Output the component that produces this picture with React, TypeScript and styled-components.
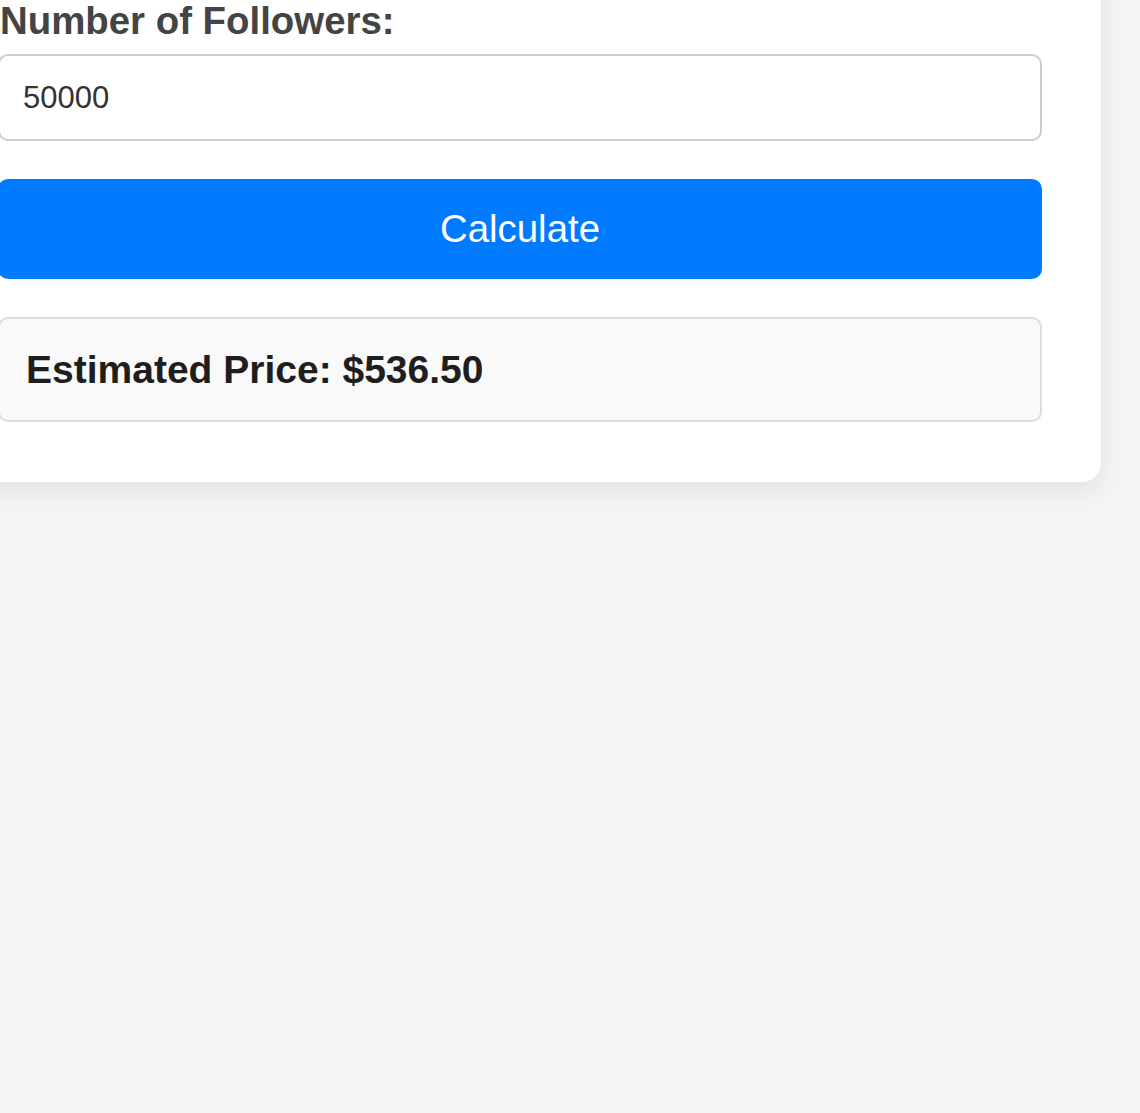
import styled, { createGlobalStyle } from "styled-components";

export default function App() {
  return (
    <>
      <GlobalStyle />
      <Page>
        <Card>
          <Label htmlFor="followers">Number of Followers:</Label>
          <Input id="followers" type="text" defaultValue="50000" readOnly />
          <CalcButton type="button">Calculate</CalcButton>
          <Result>Estimated Price: $536.50</Result>
        </Card>
      </Page>
    </>
  );
}

const GlobalStyle = createGlobalStyle`
  html, body {
    margin: 0;
    padding: 0;
    background: #f3f4f6;
    font-family: "Liberation Sans", Arial, sans-serif;
    overflow: hidden;
  }
`;

const Page = styled.div`
  width: 1140px;
  height: 1113px;
  background: #f3f4f6;
  overflow: hidden;
`;

const Card = styled.div`
  box-sizing: border-box;
  width: 1163px;
  margin: -61px 0 0 -62px;
  padding: 60px 59px 60px 60px;
  background: #fff;
  border-radius: 19px;
  box-shadow: 0 8px 24px rgba(0, 0, 0, 0.08);
  display: flex;
  flex-direction: column;
`;

const Label = styled.label`
  display: block;
  padding-left: 2px;
  font-size: 38.4px;
  font-weight: bold;
  color: #444;
  line-height: 44px;
`;

const Input = styled.input`
  box-sizing: border-box;
  height: 87px;
  margin-top: 11px;
  padding: 0 23px;
  border: 2px solid #ccc;
  border-radius: 10px;
  background: #fff;
  font-family: "Liberation Sans", Arial, sans-serif;
  font-size: 31px;
  color: #333;
  outline: none;
`;

const CalcButton = styled.button`
  height: 100px;
  margin-top: 38px;
  border: none;
  border-radius: 10px;
  background: #007bff;
  color: #fff;
  font-family: "Liberation Sans", Arial, sans-serif;
  font-size: 38.4px;
  cursor: pointer;
`;

const Result = styled.div`
  box-sizing: border-box;
  height: 105px;
  margin-top: 38px;
  padding: 0 26px;
  display: flex;
  align-items: center;
  background: #f9f9f9;
  border: 2px solid #ddd;
  border-radius: 10px;
  font-size: 39px;
  font-weight: bold;
  color: #1e1e1e;
`;
